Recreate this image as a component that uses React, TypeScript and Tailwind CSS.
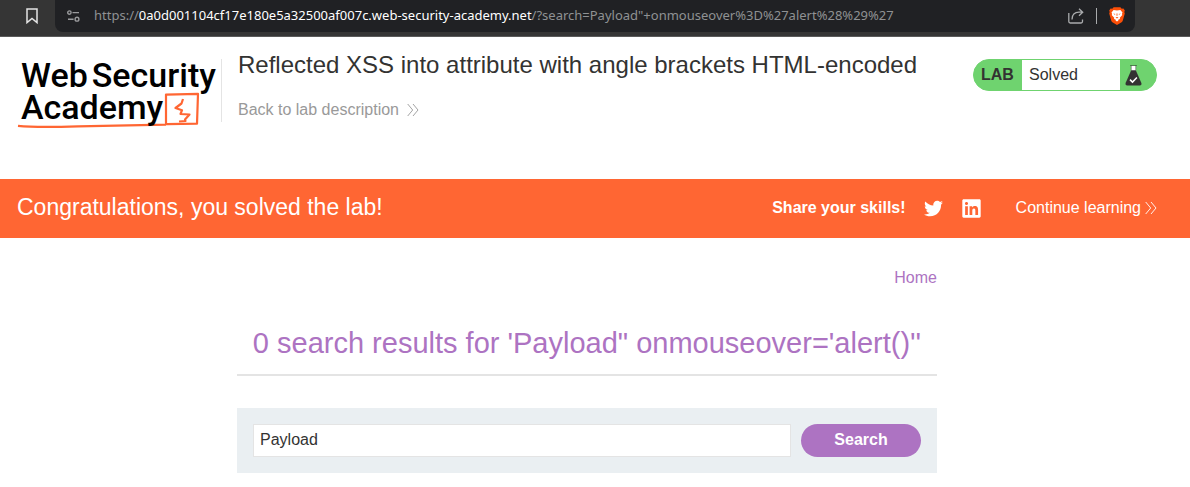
import { useState } from "react";
import { FaLinkedin, FaTwitter } from "react-icons/fa";

function BookmarkIcon() {
  return (
    <svg width="12" height="16" viewBox="0 0 12 16" fill="none" stroke="#e4e4e4" strokeWidth="1.5">
      <path d="M1 1h10v13.6L6 10.4 1 14.6z" />
    </svg>
  );
}

function SiteSettingsIcon() {
  return (
    <svg width="13" height="12" viewBox="0 0 13 12" fill="none" stroke="#9a9b9d" strokeWidth="1.4">
      <circle cx="2.4" cy="2.6" r="1.7" />
      <path d="M5.5 2.6H12M1 9.2h5.6" />
      <circle cx="10" cy="9.2" r="1.9" />
    </svg>
  );
}

function ShareIcon() {
  return (
    <svg width="16" height="16" viewBox="0 0 16 16" fill="none" stroke="#a9abad" strokeWidth="1.3">
      <path d="M.8 5v8.6q0 1.4 1.4 1.4h10.9q1.4 0 1.4-1.4v-2" />
      <path d="M4 11.4C4 6.8 6.6 4.2 11 4.2h3.4M11 .8l3.7 3.4L11 7.8" />
    </svg>
  );
}

function BraveIcon() {
  return (
    <svg width="16" height="18" viewBox="0 0 16 18">
      <path
        d="M4.6.2h6.8l1.3 1.5 1.7-.2 1.4 2-.5 1.4.5 1.5-2 7.2q-.3 1-1.2 1.6L8 18l-4.6-2.8q-.9-.6-1.2-1.6L.2 6.4l.5-1.5-.5-1.4 1.4-2 1.7.2z"
        fill="#fb4f08"
      />
      <path
        d="M4.6 3.1 8 3.6l3.4-.5 2.1 2.5-.6 1.3.4 1.2-2.5 2.7.2 1.3-1.5.4-.3 1.2L8 14.6l-1.2-.9-.3-1.2-1.5-.4.2-1.3-2.5-2.7.4-1.2-.6-1.3z"
        fill="#fff"
      />
      <path
        d="M4.2 6.5l2.3.5-.7.8zM11.8 6.5l-2.3.5.7.8zM7.5 6.5h1l-.2 2.6h-.6zM6.5 10.5 8 9.9l1.5.6L8 11.5z"
        fill="#fb4f08"
      />
    </svg>
  );
}

function FlaskIcon() {
  return (
    <svg width="17" height="21" viewBox="0 0 17 21">
      <path d="M6 1h5v8H6z" fill="#fff" />
      <path d="M5 .5h7M6.3.5v5M10.7.5v5" stroke="#333332" strokeWidth=".5" />
      <path d="M6.2 5.2h4.6l5.6 12.9q.6 2.4-1.7 2.4H2.3q-2.3 0-1.7-2.4z" fill="#333332" />
      <path d="M5 14.6l2.5 2.5 4.4-4.6" fill="none" stroke="#fff" strokeWidth="1.5" />
    </svg>
  );
}

function Chevrons() {
  return (
    <svg width="12" height="14" viewBox="0 0 12 14" fill="none" stroke="currentColor" strokeWidth=".9">
      <path d="M.7 1l5 6-5 6M6 1l5 6-5 6" />
    </svg>
  );
}

function BrowserBar() {
  return (
    <div className="flex h-[37px] items-start border-b border-[#5a5a5a] bg-[#353535]">
      <button aria-label="Bookmark this page" className="ml-[26px] mt-2 h-4 w-3">
        <BookmarkIcon />
      </button>
      <div className="ml-[17px] mr-[55px] flex h-8 min-w-0 flex-1 items-center rounded-b-lg bg-[#202124] pl-3 pr-2.5">
        <SiteSettingsIcon />
        <div className="ml-3.5 flex-1 truncate font-['Noto_Sans','Open_Sans',sans-serif] text-[13px] text-[#8f9193]">
          https://
          <span className="text-white">0a0d001104cf17e180e5a32500af007c.web-security-academy.net</span>
          /?search=Payload"+onmouseover%3D%27alert%28%29%27
        </div>
        <button aria-label="Share">
          <ShareIcon />
        </button>
        <div className="mx-3 h-4 w-px bg-[#a9abad]" />
        <button aria-label="Brave Shields">
          <BraveIcon />
        </button>
      </div>
    </div>
  );
}

function Logo() {
  return (
    <a
      href="#"
      className="relative block h-[63px] w-[205px] shrink-0 border-r border-[#e4e4e4] pl-1 font-['Roboto',sans-serif] text-[34px] font-medium leading-8 text-black"
    >
      <svg
        className="absolute left-0 top-8 h-10 w-[186px]"
        viewBox="0 0 186 40"
        fill="none"
        stroke="#ff6633"
        strokeWidth="2.2"
        strokeLinejoin="round"
      >
        <path d="M149 34.3V3.6l32-.8-1 29.8-30 .6M1 34.8q18 2 60 .5l88-1.6" />
        <path d="M166 8l-1.5 4.5-6 4.5 6.5 2.2-1.5 3.8 9 .5-4.5 5 .5 1.5-6.5.5" />
      </svg>
      <span className="relative flex gap-1">
        <span>Web</span>
        <span>Security</span>
      </span>
      <span className="relative block">Academy</span>
    </a>
  );
}

function LabHeader() {
  return (
    <header className="pr-4">
      <div className="mx-auto flex h-[142px] max-w-[1140px] items-start pt-[22px]">
        <Logo />
        <div className="ml-4 -mt-2 flex-1">
          <h2 className="text-2xl leading-7">Reflected XSS into attribute with angle brackets HTML-encoded</h2>
          <a href="#" className="mt-[19px] flex items-center gap-2 text-base leading-6 text-[#999999]">
            Back to lab description
            <Chevrons />
          </a>
        </div>
        <div className="flex h-8 w-[184px] shrink-0 items-center rounded-full border border-[#6fd36f] bg-[#6fd36f]">
          <span className="w-12 pl-[7px] font-bold">LAB</span>
          <p className="flex h-full flex-1 items-center bg-white pl-[7px]">Solved</p>
          <span className="flex w-9 pl-[5px]">
            <FlaskIcon />
          </span>
        </div>
      </div>
    </header>
  );
}

function SolvedBanner() {
  return (
    <section className="bg-[#ff6633] pr-4 text-white">
      <div className="mx-auto flex h-[59px] max-w-[1140px] items-center pb-0.5">
        <h4 className="flex-1 text-[23px]">Congratulations, you solved the lab!</h4>
        <span className="font-bold">Share your skills!</span>
        <a href="#" aria-label="Share on Twitter" className="ml-[18px] pt-0.5">
          <FaTwitter size={19} />
        </a>
        <a href="#" aria-label="Share on LinkedIn" className="ml-[18px] pt-0.5">
          <FaLinkedin size={21} />
        </a>
        <a href="#" className="ml-[34px] flex items-center gap-1">
          Continue learning
          <Chevrons />
        </a>
      </div>
    </section>
  );
}

function SearchForm() {
  const [query, setQuery] = useState("Payload");
  return (
    <form
      onSubmit={(event) => event.preventDefault()}
      className="mt-8 flex gap-2.5 bg-[#eaeff2] p-4"
    >
      <input
        type="text"
        aria-label="Search the blog"
        value={query}
        onChange={(event) => setQuery(event.target.value)}
        className="h-[33px] min-w-0 flex-1 border border-[#e4e4e4] bg-white px-1.5 pb-0.5"
      />
      <button type="submit" className="h-[33px] w-[120px] rounded-full bg-[#ad73c2] pb-0.5 font-bold text-white">
        Search
      </button>
    </form>
  );
}

export default function App() {
  return (
    <div className="min-h-screen bg-white font-['Liberation_Sans',Arial,sans-serif] text-base text-[#333332]">
      <BrowserBar />
      <LabHeader />
      <SolvedBanner />
      <div className="pr-4">
        <main className="mx-auto max-w-[700px] pt-7">
          <nav className="text-right text-[#ad73c2]">
            <a href="#">Home</a>
          </nav>
          <h1 className="mt-[33px] border-b-2 border-[#e4e4e4] pb-[11px] text-center text-[29px] leading-10 text-[#ad73c2]">
            0 search results for 'Payload" onmouseover='alert()''
          </h1>
          <SearchForm />
        </main>
      </div>
    </div>
  );
}
